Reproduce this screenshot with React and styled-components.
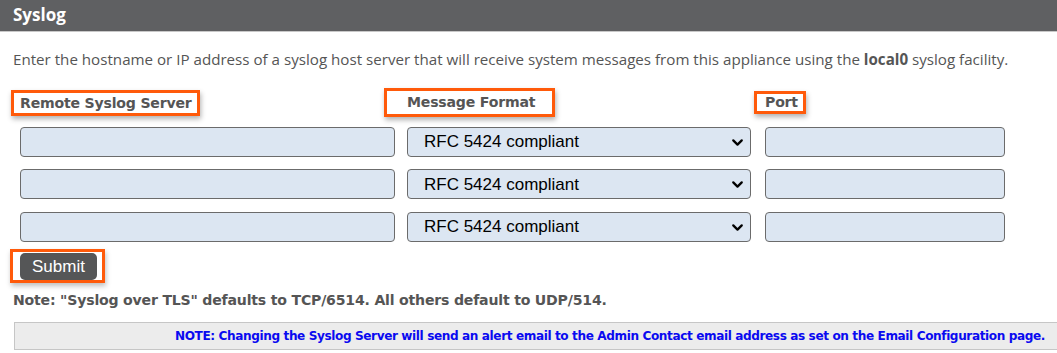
import React from "react";
import styled, { createGlobalStyle } from "styled-components";
import { ChevronDown } from "lucide-react";

const GlobalStyle = createGlobalStyle`
  body {
    margin: 0;
    background: #fff;
    font-family: "Open Sans", "Liberation Sans", sans-serif;
  }
`;

const rows = [0, 1, 2];

function App() {
  return (
    <>
      <GlobalStyle />
      <Page>
        <Header>Syslog</Header>
        <Intro>
          Enter the hostname or IP address of a syslog host server that will
          receive system messages from this appliance using the{" "}
          <b>local0</b> syslog facility.
        </Intro>
        <Grid>
          <Label $left={6} $right={5} $top={2} $bottom={1}>
            Remote Syslog Server
          </Label>
          <Label $left={20} $right={17} $top={3} $bottom={3}>
            Message Format
          </Label>
          <Label $left={8} $right={5} $top={0} $bottom={0}>
            Port
          </Label>
          {rows.map((r) => (
            <React.Fragment key={r}>
              <TextInput type="text" />
              <SelectWrap>
                <Select defaultValue="rfc5424">
                  <option value="rfc5424">RFC 5424 compliant</option>
                  <option value="rfc3164">RFC 3164 compliant</option>
                  <option value="tls">Syslog over TLS</option>
                </Select>
                <Chevron size={17} strokeWidth={3.2} />
              </SelectWrap>
              <TextInput type="text" />
            </React.Fragment>
          ))}
        </Grid>
        <SubmitBox>
          <SubmitButton>Submit</SubmitButton>
        </SubmitBox>
        <Note>
          Note: "Syslog over TLS" defaults to TCP/6514. All others default to
          UDP/514.
        </Note>
        <AlertBar>
          NOTE: Changing the Syslog Server will send an alert email to the
          Admin Contact email address as set on the Email Configuration page.
        </AlertBar>
      </Page>
    </>
  );
}

const Page = styled.div`
  width: 1057px;
  height: 353px;
  overflow: hidden;
`;

const Header = styled.div`
  height: 31px;
  background: #5f6062;
  border-bottom: 1px solid #c8c8c8;
  color: #fff;
  font-family: "Open Sans", sans-serif;
  font-weight: 700;
  font-size: 17px;
  line-height: 29px;
  padding-left: 13px;
`;

const Intro = styled.p`
  margin: 17px 0 0 13px;
  font-size: 15.15px;
  line-height: 21px;
  color: #555;
  b {
    font-weight: 700;
  }
`;

const Grid = styled.div`
  display: grid;
  grid-template-columns: 375px 346px 240px;
  column-gap: 12px;
  row-gap: 12.5px;
  padding-left: 20px;
  margin-top: 18px;
  align-items: center;
`;

const Label = styled.div`
  justify-self: start;
  font-family: "DejaVu Sans", Verdana, sans-serif;
  font-weight: 700;
  font-size: 14.1px;
  line-height: 17px;
  color: #555;
  letter-spacing: -0.2px;
  border: 3px solid #ff5a0a;
  box-shadow: 1px 3px 5px rgba(0, 0, 0, 0.3);
  padding: ${(p) => p.$top}px ${(p) => p.$right}px ${(p) => p.$bottom}px
    ${(p) => p.$left}px;
  margin-left: ${(p) => -(p.$left + 3)}px;
  margin-bottom: -3px;
`;

const TextInput = styled.input`
  box-sizing: border-box;
  width: 100%;
  height: 30px;
  margin: 0;
  background: #dce6f2;
  border: 1px solid #6b6b6b;
  border-radius: 4px;
  outline: none;
`;

const SelectWrap = styled.div`
  position: relative;
  width: 344px;
`;

const Select = styled.select`
  display: block;
  box-sizing: border-box;
  width: 100%;
  height: 30px;
  margin: 0;
  appearance: none;
  background: #dce6f2;
  border: 1px solid #6b6b6b;
  border-radius: 4px;
  padding: 0 0 0 16px;
  font-family: "Liberation Sans", Arial, sans-serif;
  font-size: 17px;
  color: #000;
  outline: none;
`;

const Chevron = styled(ChevronDown)`
  position: absolute;
  right: 5px;
  top: 7px;
  color: #000;
  pointer-events: none;
`;

const SubmitBox = styled.div`
  display: inline-block;
  margin: 7px 0 0 10px;
  border: 3px solid #ff5a0a;
  padding: 1px 5px 0 7px;
  box-shadow: 1px 3px 5px rgba(0, 0, 0, 0.25);
  line-height: 0;
`;

const SubmitButton = styled.button`
  height: 27px;
  padding: 0 12px;
  background: #555657;
  color: #fff;
  border: none;
  border-radius: 5px;
  font-family: "Liberation Sans", Arial, sans-serif;
  font-size: 17px;
  line-height: 27px;
`;

const Note = styled.div`
  margin: 8px 0 0 13px;
  font-family: "DejaVu Sans", Verdana, sans-serif;
  font-weight: 700;
  font-size: 14.1px;
  line-height: 18px;
  color: #555;
  letter-spacing: -0.2px;
`;

const AlertBar = styled.div`
  box-sizing: border-box;
  margin: 13px 0 0 14px;
  height: 28px;
  background: #ececec;
  border: 1px solid #c6c6c6;
  border-right: none;
  padding-right: 12px;
  text-align: right;
  color: #0a0af0;
  font-family: "DejaVu Sans", Tahoma, sans-serif;
  font-weight: 700;
  font-size: 12.1px;
  line-height: 26px;
  letter-spacing: -0.4px;
`;

export default App;
